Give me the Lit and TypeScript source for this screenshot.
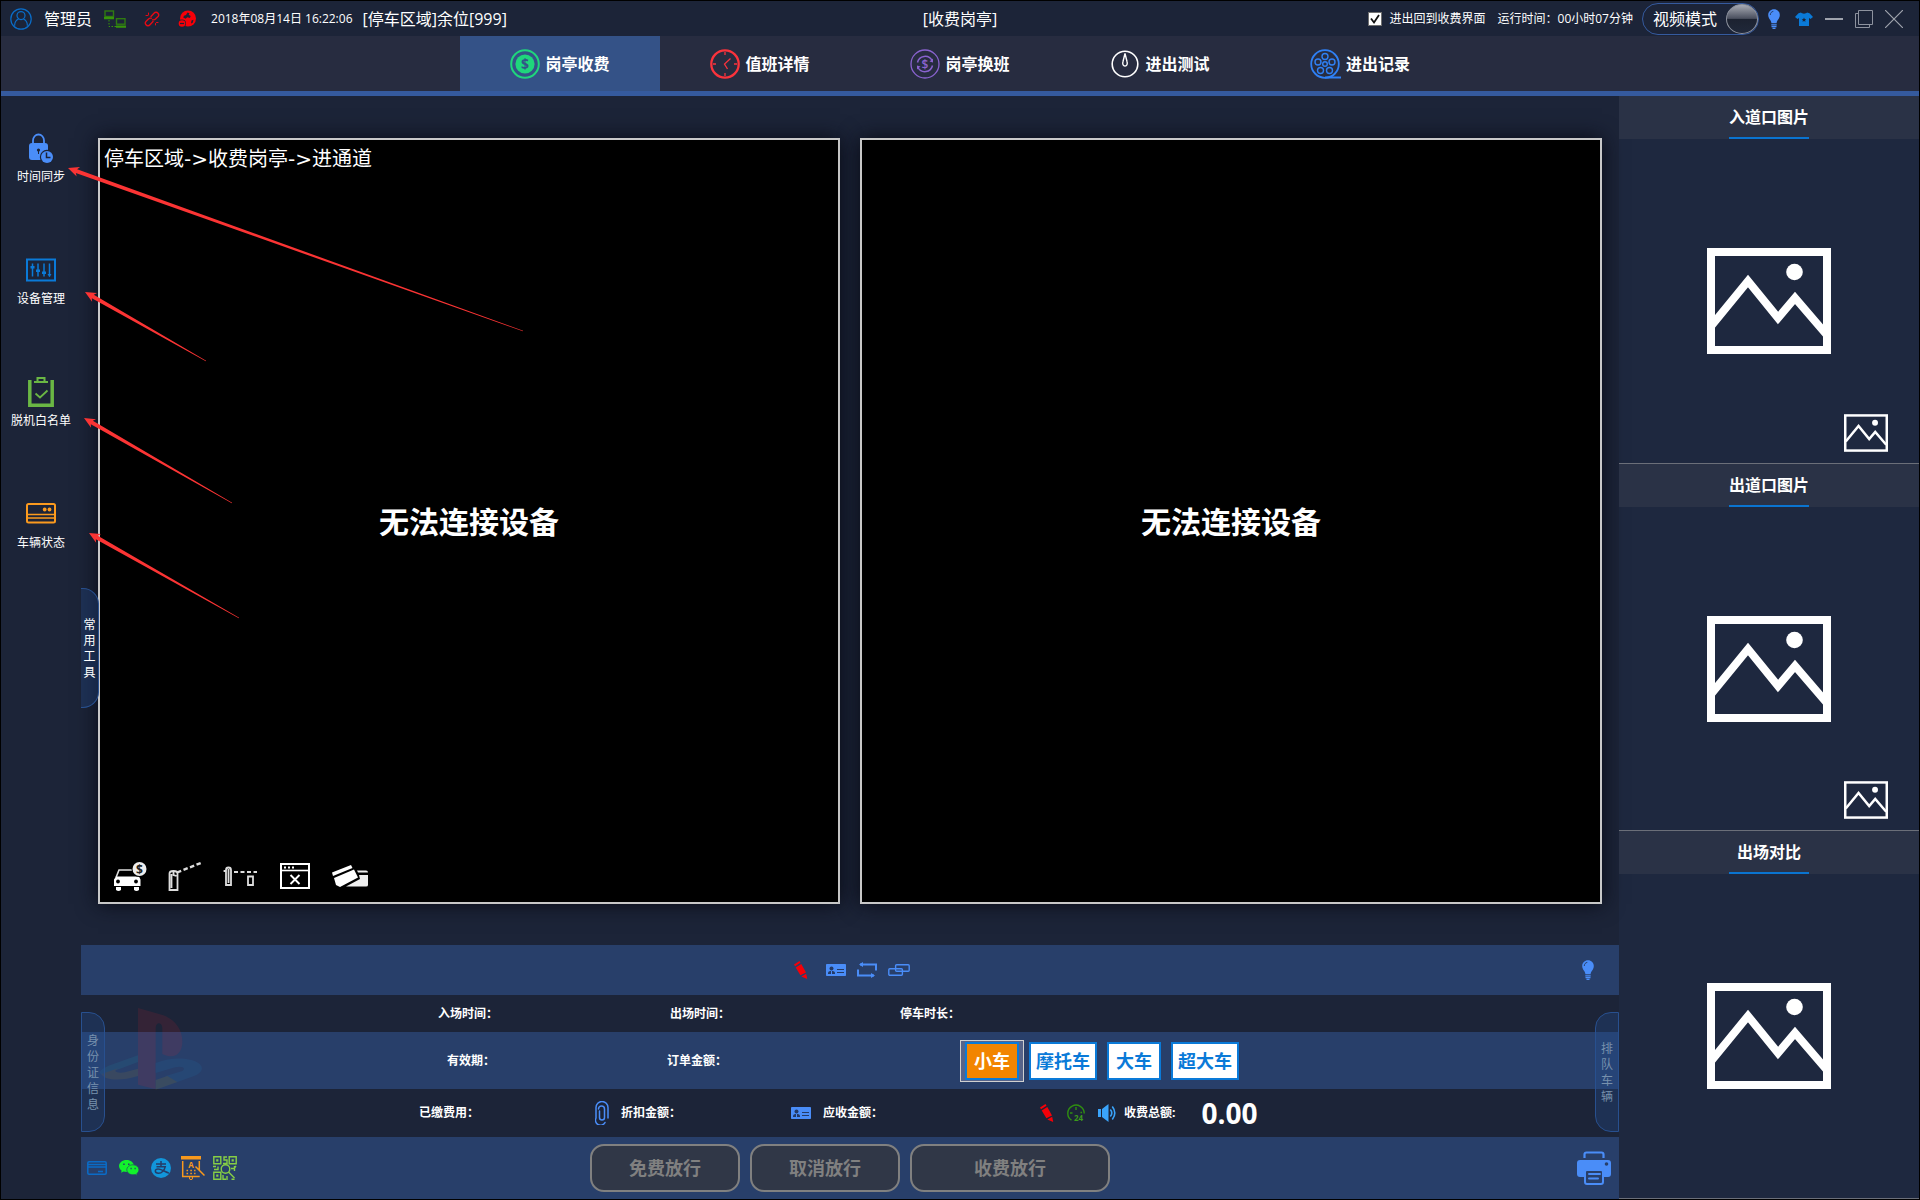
import { LitElement, html, css, svg, type TemplateResult } from "lit";
import { customElement, property, state } from "lit/decorators.js";
import { classMap } from "lit/directives/class-map.js";

const icon = (w: number, h: number, box: string, body: TemplateResult) =>
  html`<svg width=${w} height=${h} viewBox=${box} fill="none" aria-hidden="true">${body}</svg>`;

const userIcon = icon(22, 22, "0 0 22 22", svg`
  <g stroke="#0a6dc9" stroke-width="1.2"><circle cx="11" cy="11" r="10.2"/><circle cx="11" cy="7.6" r="4"/>
  <path d="M8.6 11C6 12 4.6 14.4 4.6 17.8M13.4 11c2.6 1 4 3.400 4 6.800"/></g>`);

const networkIcon = icon(22, 18, "0 0 22 18", svg`
  <g stroke="#2f7a12" stroke-width="1.400"><rect x="1" y="1" width="8.500" height="5.500"/><rect x="12.500" y="8.700" width="8.500" height="5.500"/></g>
  <path fill="#36940b" d="M0 7h10v2.200H0zM12 15.500h10v2.300H12z"/>
  <path stroke="#36940b" stroke-dasharray="1.500 1.500" d="M5 10v6.500h7"/>`);

const brokenLinkIcon = icon(16, 16, "0 0 16 16", svg`
  <g stroke="#e80a14" stroke-width="1.400" stroke-linecap="round">
  <path d="M7 5.500l3-3.300c1.200-1.300 3-1.200 4 0s.9 2.500-.2 3.600L11.500 8c-.8.8-1.700 1-2.700.8"/>
  <path d="M9 10.500l-3 3.300c-1.200 1.300-3 1.200-4 0s-.9-2.500.2-3.600L4.500 8c.8-.8 1.700-1 2.700-.8"/>
  <path stroke-width="1" d="M4.500 2v1.500M2 4.500h1.500M4 4.600l-.2-.3M11.500 14v-1.500M14 11.500h-1.500"/></g>`);

const globeIcon = icon(18, 18, "0 0 18 18", svg`
  <circle cx="10" cy="8.500" r="8" fill="#f80008"/>
  <path fill="#1c2438" d="M9.500 2.500l2 .8-.8 1.500 2 1.200-.8 2-2.600-.8-1.700 1.600-2.400-1.200L6 5.800l2-.8zM13.500 10.500l2-.8-.8 3-1.700.8z"/>
  <circle cx="4" cy="13.500" r="4" fill="#1c2438"/><circle cx="4" cy="13.500" r="3.300" fill="#f80008"/>
  <path stroke="#1c2438" stroke-width="1.200" d="M2 13.500h4"/>`);

const bulbIcon = (w: number, h: number) => icon(w, h, "0 0 12 20", svg`
  <path fill="#4a8df8" d="M6 .3C2.700.3.200 2.800.200 6c0 2.200 1 3.500 2 5 .7 1.100 1 1.900 1.200 3.200h5.200c.2-1.300.5-2.100 1.200-3.200 1-1.500 2-2.800 2-5C11.800 2.800 9.300.300 6 .300z"/>
  <path stroke="#283f6a" d="M2.300 6c0-2 1.200-3.400 3-3.600"/>
  <path stroke="#4a8df8" stroke-width="1.200" d="M3.300 15.800h5.400M3.500 17.600h5M4.500 19.300h3"/>`);

const shirtIcon = icon(18, 14, "0 0 18 14", svg`
  <path fill="#0a7ad8" d="M6 .5c.8 1.500 5.200 1.500 6 0l2.500.8L18 5l-2.500 2-1.500-1v8H4V6L2.500 7 0 5l3.500-3.700z"/>
  <path fill="#1c2438" d="M9 5.500l.7 1.500 1.600.1-1.200 1 .4 1.600L9 8.900l-1.500.8.4-1.600-1.200-1 1.600-.1z"/>`);

const minimizeIcon = icon(18, 18, "0 0 18 18", svg`<path stroke="#9fa3ad" stroke-width="2" d="M0 9h18"/>`);
const restoreIcon = icon(18, 18, "0 0 18 18", svg`<path stroke="#8e939f" d="M3.500.5h14v14h-14zM3.500 3.500h-3v14h14v-3"/>`);
const closeIcon = icon(18, 18, "0 0 18 18", svg`<path stroke="#9fa3ad" stroke-width="1.200" d="M0 0l18 18M18 0L0 18"/>`);

const coinIcon = icon(30, 30, "0 0 30 30", svg`
  <circle cx="15" cy="15" r="13.800" stroke="#1fd67c" stroke-width="2"/><circle cx="15" cy="15" r="9.600" fill="#1fd67c"/>
  <text x="15" y="20" text-anchor="middle" font-family="Open Sans" font-size="14" fill="#345287">$</text>`);
const clockIcon = icon(30, 30, "0 0 30 30", svg`
  <circle cx="15" cy="15" r="13.700" stroke="#fb333c" stroke-width="2.300"/>
  <path stroke="#fb333c" stroke-width="1.300" d="M15 3v3M15 24v3M3 15h3M24 15h3M20.500 9.500L14.500 15l3 5"/>`);
const shiftIcon = icon(30, 30, "0 0 30 30", svg`
  <circle cx="15" cy="15" r="14" stroke="#8a63cf" stroke-width="1.300"/>
  <path stroke="#8a63cf" stroke-width="1.500" d="M7.500 13.500a7.800 7.800 0 0 1 14.500-2M22.500 16.500a7.800 7.800 0 0 1-14.500 2"/>
  <path fill="#8a63cf" d="M23 9.500v4l-3.500-1zM7 20.500v-4l3.500 1z"/>
  <text x="15" y="19.500" text-anchor="middle" font-family="Open Sans" font-weight="600" font-size="12" fill="#8a63cf">$</text>`);
const gaugeIcon = icon(30, 30, "0 0 30 30", svg`
  <circle cx="15" cy="15" r="12.800" stroke="#fff" stroke-width="1.600"/>
  <path stroke="#fff" stroke-width="1.400" d="M15 4.500l-2 8c-.8 2.500.200 4.500 2 4.500s2.800-2 2-4.500z"/>`);
const reelIcon = icon(31, 30, "0 0 31 30", svg`
  <g stroke="#2f80f5" stroke-width="1.400"><circle cx="15" cy="15" r="13.800" stroke-width="1.800"/><circle cx="15" cy="15" r="2.300"/>
  <circle cx="15" cy="7.500" r="3"/><circle cx="8" cy="13" r="3"/><circle cx="22" cy="13" r="3"/><circle cx="10.500" cy="21.500" r="3"/><circle cx="19.500" cy="21.500" r="3"/>
  <path stroke-width="2" d="M15 28.500h16"/></g>`);

const lockIcon = icon(30, 30, "0 0 30 30", svg`
  <path stroke="#4a8df8" stroke-width="1.800" d="M7 12V7.500a5.500 6 0 0 1 11 0V12"/>
  <rect x="3" y="10" width="19" height="17" rx="3" fill="#4a8df8"/>
  <circle cx="21" cy="24" r="7.200" fill="#1c2438"/><circle cx="21" cy="24" r="6" fill="#4a8df8"/>
  <path stroke="#1c2438" stroke-width="1.500" d="M20.500 19.500V24.500h4"/>
  <circle cx="12.500" cy="17" r="1.600" fill="#1c2438"/><path stroke="#1c2438" d="M12.500 17v4"/>`);
const slidersIcon = icon(30, 30, "0 0 30 30", svg`
  <rect x="1" y="4.500" width="28" height="21" stroke="#0a7ad8" stroke-width="2"/>
  <path stroke="#0a7ad8" stroke-width="1.500" d="M6.500 8.500v13M12 8.500v13M18 8.500v13M23.500 8.500v13"/>
  <path fill="#0a7ad8" d="M4.500 11h4v2.500h-4zM10 14.500h4V17h-4zM16 16.500h4V19h-4zM21.500 19h4l-2 3z"/>`);
const clipboardIcon = icon(30, 30, "0 0 30 30", svg`
  <path stroke="#6ab744" stroke-width="3.500" d="M3.800 3v25.200h22.400V3"/>
  <path stroke="#6ab744" stroke-width="2" d="M8 5h14M11.500 4V1h7v3"/>
  <path stroke="#6ab744" stroke-width="1.800" d="M9.500 16.500l4.500 4 7.500-7"/>`);
const cardReaderIcon = icon(30, 30, "0 0 30 30", svg`
  <rect x="1" y="5" width="28" height="18.500" rx="1.500" stroke="#fb9a1e" stroke-width="2"/>
  <path stroke="#fb9a1e" stroke-width="1.600" d="M1 15.500h28M1 19h28"/>
  <circle cx="18.700" cy="10.500" r="1.900" fill="#fb9a1e"/><circle cx="23.500" cy="10.500" r="1.900" fill="#fb9a1e"/>`);

const carFeeIcon = icon(36, 36, "0 0 36 36", svg`
  <path stroke="#ddd" stroke-width="1.600" d="M4 19.500l3-7.500h13"/>
  <path fill="#fff" d="M4 18.500h23l1.500 3V28H2v-6.500zM4 29h5v3q-2.500 2-5 0zM22 29h5v3q-2.500 2-5 0z"/>
  <circle cx="6" cy="23.500" r="1.900" fill="#000"/><circle cx="24" cy="23.500" r="1.900" fill="#000"/>
  <circle cx="27.500" cy="11" r="8" fill="#000"/><circle cx="27.500" cy="11" r="7" fill="#eee"/>
  <text x="27.500" y="15.500" text-anchor="middle" font-family="Open Sans" font-weight="700" font-size="12" fill="#222">$</text>`);
const gateOpenIcon = icon(36, 36, "0 0 36 36", svg`
  <path stroke="#ddd" stroke-width="1.800" d="M2.500 32V15.500q0-2.500 4-2.500t4 2.500V32zM4.500 16v14M6.500 13v4l3 1"/>
  <path stroke="#ddd" stroke-width="2.400" stroke-dasharray="4.500 2.500" d="M10 14.500L35 4.500"/>`);
const gateClosedIcon = icon(36, 36, "0 0 36 36", svg`
  <path stroke="#ddd" stroke-width="1.800" d="M4 27V12q0-2.500 2.500-2.500T9 12v15zM6.500 11v14M2.500 14v-2M26 18.500h5v8.500h-5z"/>
  <path stroke="#ddd" stroke-width="2" stroke-dasharray="4 2.500" d="M12 14h23"/>`);
const windowCloseIcon = icon(36, 36, "0 0 36 36", svg`
  <rect x="4" y="6" width="28" height="24" stroke="#fff" stroke-width="2"/>
  <path stroke="#fff" stroke-width="1.600" d="M4 12.500h28"/>
  <path stroke="#fff" stroke-width="2" stroke-dasharray="2 2" d="M7 9.500h10"/>
  <path stroke="#fff" stroke-width="1.900" d="M13.500 17l9 9M22.500 17l-9 9"/>`);
const cardsIcon = icon(36, 36, "1 0 36 36", svg`
  <path fill="#fff" d="M1 14.500L20 7l1.500 3L2 18zM3 20l20-8.500 4 8L9 29l-4-2z"/>
  <path fill="#eee" d="M26 12.500h9q2 0 2 2h-10zM28 17h9v10q0 1.500-2 1.500H15L29 21z"/>`);

const pencilIcon = icon(14, 18, "0 0 14 18", svg`
  <path fill="#f50008" d="M0 3.500L5.500 0l1 1.800L1 5.300zM1.700 6.500L7.300 3l4.700 8.500-5.600 2.800zM7.300 15.500l4.900-2.700 1 5.200z"/>`);
const idCardIcon = icon(20, 12, "0 0 20 12", svg`
  <rect width="20" height="12" rx=".8" fill="#4a8df8"/>
  <path fill="#243a66" d="M2 10V9q0-1.500 2-2h3q2 .5 2 2v1z"/><circle cx="5.500" cy="4.600" r="2" fill="#243a66"/>
  <path stroke="#243a66" stroke-width="1.200" d="M11 5.500h7M11 8.500h7"/><path stroke="#4a8df8" d="M5.500 7v3"/>`);
const loopIcon = icon(20, 16, "0 0 20 16", svg`
  <path stroke="#4a8df8" stroke-width="2" d="M3 2.500h16v6M17 13.500H1v-6"/>
  <path fill="#4a8df8" d="M2 2.500L6 0v5zM18 13.500L14 11v5z"/>`);
const chainIcon = icon(22, 12, "0 0 22 12", svg`
  <g stroke="#4a8df8" stroke-width="1.400"><rect x="7.600" y=".8" width="13.600" height="6.400" rx="1"/>
  <rect x=".8" y="4.800" width="13.600" height="6.400" rx="1"/></g>`);
const paperclipIcon = icon(14, 24, "0 0 14 24", svg`
  <path stroke="#4a8df8" stroke-width="1.500" stroke-linecap="round" d="M4.500 10v6.500a2.500 2.500 0 0 0 5 0V8a3 3 0 0 0-6 0M13 17V6.500A5.800 5.800 0 0 0 1 6.500V17a5 5 0 0 0 9 4.500"/>`);
const clock24Icon = icon(18, 18, "0 0 18 18", svg`
  <path stroke="#2f8f10" stroke-width="1.400" d="M4.500 16.200A8.200 8.200 0 1 1 17.200 9.500M9 3v3M3 9h2.500M13.500 8.500h1.500"/>
  <text x="7" y="17" font-family="Open Sans" font-weight="700" font-size="8" fill="#3c9a1c">24</text>`);
const speakerIcon = icon(18, 18, "0 0 18 18", svg`
  <path fill="#3aa4fb" d="M0 5h3v8H0zM4 5l6.500-5v18L4 13z"/>
  <path stroke="#3aa4fb" stroke-width="1.600" d="M12.300 5.500q3 3.500 0 7M14.300 2.500q5 6.500 0 13"/>`);
const printerIcon = icon(34, 34, "0 0 34 34", svg`
  <path stroke="#4a8df8" stroke-width="2.200" d="M7.500 7V3.500q0-2 2-2h15q2 0 2 2V7"/>
  <path fill="#4a8df8" d="M3 9h28q3 0 3 3v11q0 3-3 3H3q-3 0-3-3V12q0-3 3-3z"/>
  <rect x="8" y="19" width="18" height="14" rx="2" fill="#283f6a" stroke="#4a8df8" stroke-width="2"/>
  <path stroke="#4a8df8" stroke-width="2" stroke-linecap="round" d="M12 23h11M12 27.500h9"/>
  <circle cx="29.500" cy="13" r="1.800" fill="#283f6a"/>`);

const bankCardIcon = icon(20, 14, "0 0 20 14", svg`
  <rect x=".8" y=".8" width="18.400" height="12.400" rx="1.200" stroke="#0a6cc8" stroke-width="1.500"/>
  <path stroke="#0a6cc8" stroke-width="1.500" d="M1 3.500h18M1 6h18M11 10.500h5"/>`);
const wechatIcon = icon(20, 16, "0 0 20 16", svg`
  <path fill="#12f22c" d="M7.500 0C3.300 0 0 2.700 0 6c0 1.900 1 3.500 2.700 4.700L2 12.800l2.600-1.300c1 .3 1.900.4 2.900.4C11.700 11.900 15 9.300 15 6S11.700 0 7.500 0z"/>
  <path fill="#12f22c" stroke="#283f6a" stroke-width=".7" d="M14 4.800c-3.400 0-6.200 2.200-6.200 5s2.800 5 6.200 5c.7 0 1.500-.1 2.200-.4l2 1.200-.5-1.900c1.400-.9 2.200-2.300 2.200-3.900 0-2.800-2.500-5-5.900-5z"/>
  <path stroke="#283f6a" stroke-width="1.500" d="M4.200 4.200h1.500M9 4.200h1.500M11.500 8.500h1.200M15.500 8.500h1.200"/>`);
const alipayIcon = icon(20, 20, "0 0 20 20", svg`
  <circle cx="10" cy="10" r="10" fill="#1296db"/>
  <path stroke="#253d69" stroke-width="1.500" d="M5 6h10M10 3v5.500M5.500 8.800h8.700c-.7 3-3.200 6.500-6.700 6.500-2 0-3.200-.9-3.200-2.200 0-1.500 1.600-2.200 3.200-2 3 .3 6.500 2.600 10.500 4"/>`);
const boardIcon = icon(24, 24, "0 0 24 24", svg`
  <path fill="#f8991d" d="M0 0h20v3.500H0z"/><path stroke="#f8991d" stroke-width="1.500" d="M1.700 5v15.500h17M18.300 5v9M14.500 10.500L23.500 19.500"/>
  <circle cx="10" cy="22" r="1.600" stroke="#f8991d"/>
  <path stroke="#f8991d" stroke-width="1.400" stroke-dasharray="1.600 2.200" d="M5.500 14.500h9M5.500 17.500h9"/>
  <text x="10" y="11.500" text-anchor="middle" font-family="Open Sans" font-weight="700" font-size="8" fill="#f8991d">A</text>`);
const qrIcon = icon(24, 24, "0 0 24 24", svg`
  <g stroke="#86cf45" stroke-width="1.400"><path d="M.8.8h7v7h-7zM16.200.8h7v7h-7zM.8 16.200h7v7h-7z"/>
  <path d="M14 1h-3v3h3v3.500h-4M0 10.500h3M1 13.500h4v-3M18 12.500h3l2-2.500M21.500 10v5M10 19v4.300h3M14 20v4M18.500 23.300h3"/>
  <circle cx="12.500" cy="13" r="4.300"/><path d="M15.500 16l6 6"/></g>
  <path fill="#86cf45" d="M3.200 3.200h2.200v2.200H3.200zM18.600 3.200h2.200v2.200h-2.200zM3.200 18.600h2.200v2.200H3.200z"/>`);

const pictureIcon = (w: number, h: number, line: number) => icon(w, h, "0 0 124 106", svg`
  <rect x=${line / 2} y=${line / 2} width=${124 - line} height=${106 - line} stroke="#fff" stroke-width=${line}/>
  <path stroke="#fff" stroke-width=${line} d="M5 77L41 33l30 37 17-20 31 36"/>
  <circle cx="87.500" cy="24" r="8.300" fill="#fff"/>`);

const consoleWatermark = icon(103, 82, "0 0 309 246", svg`
  <path fill="#e0202a" d="M114 0l76 22c35 12 57 43 57 78 0 40-25 55-60 38V60c0-18-20-20-20 0v184l-53-14z"/>
  <path fill="#1a9bb0" d="M114 142L30 172C2 184-6 192 4 200l56-18 54-20z"/>
  <path fill="#b08a20" d="M4 198c10 20 60 22 110 6v-22l-39 11c-26 4-40-4-18-13z"/>
  <path fill="#1a7fc0" d="M167 165c53-20 103-15 128 0 20 15 10 30-15 40l-50 18-35-18 50-15c17-10 0-18-20-12l-58 17z"/>
  <path fill="#b0a020" d="M167 216l35-12 30 18-65 23z"/>`);

/** Tapered pointer: a solid head at the tip, thinning to a point at the tail. */
function pointer(tx: number, ty: number, ex: number, ey: number) {
  const len = Math.hypot(ex - tx, ey - ty);
  const ux = (ex - tx) / len;
  const uy = (ey - ty) / len;
  const at = (along: number, side: number) => `${tx + ux * along - uy * side},${ty + uy * along + ux * side}`;
  const points = [at(0, 0), at(11, 5), at(9, 2), at(len, 0.3), at(len, -0.3), at(9, -2), at(11, -5)].join(" ");
  return svg`<polygon points=${points} fill="#fb3434"/>`;
}

@customElement("picture-panel")
export class PicturePanel extends LitElement {
  @property() heading = "";
  @property({ type: Boolean }) thumbnail = false;

  static styles = css`
    :host { display: flex; flex-direction: column; flex: 1; position: relative; border-bottom: 1px solid #6b6f79; }
    .heading { margin: 0; display: flex; justify-content: center; background: #2a3246; font-size: 16px; line-height: 39px; font-weight: 700; }
    .title { min-width: 80px; padding-top: 2px; text-align: center; border-bottom: 2px solid #0a74d0; }
    .picture { flex: 1; display: flex; align-items: center; justify-content: center; }
    .thumb { position: absolute; right: 31px; bottom: 11px; }
    svg { display: block; }
  `;

  render() {
    return html`
      <h2 class="heading"><span class="title">${this.heading}</span></h2>
      <div class="picture">${pictureIcon(124, 106, 8)}</div>
      ${this.thumbnail ? html`<div class="thumb">${pictureIcon(44, 38, 7)}</div>` : ""}
    `;
  }
}

@customElement("app-root")
export class AppRoot extends LitElement {
  @state() private tab = 0;
  @state() private vehicle = 0;

  private tabs = [
    { label: "岗亭收费", icon: coinIcon },
    { label: "值班详情", icon: clockIcon },
    { label: "岗亭换班", icon: shiftIcon },
    { label: "进出测试", icon: gaugeIcon },
    { label: "进出记录", icon: reelIcon },
  ];

  private tools = [
    { label: "时间同步", icon: lockIcon },
    { label: "设备管理", icon: slidersIcon },
    { label: "脱机白名单", icon: clipboardIcon },
    { label: "车辆状态", icon: cardReaderIcon },
  ];

  private vehicles = ["小车", "摩托车", "大车", "超大车"];

  static styles = css`
    :host {
      display: block;
      color: #fff;
      font-family: "Open Sans", "Noto Sans CJK SC", sans-serif;
      font-size: 12px;
      line-height: 16px;
    }
    * { box-sizing: border-box; }
    svg { display: block; flex: none; }
    button { font: inherit; color: inherit; background: none; border: 0; padding: 0; margin: 0; cursor: pointer; }
    .window { display: flex; flex-direction: column; min-height: 100vh; border: 1px solid #000; background: #1c2438; position: relative; }

    .titlebar { display: grid; grid-template-columns: 1fr auto 1fr; align-items: center; min-height: 35px; white-space: nowrap; }
    .status, .controls { display: flex; align-items: center; }
    .controls { justify-content: flex-end; gap: 12px; padding-right: 16px; }
    .status { gap: 12px; padding-left: 9px; }
    .status .signals { display: flex; align-items: center; gap: 18px; }
    .status .clock { display: flex; align-items: center; gap: 10px; padding-left: 3px; }
    .large { font-size: 16px; line-height: 24px; }
    .check { display: flex; align-items: center; gap: 8px; }
    .tick { display: grid; }
    .tick > * { grid-area: 1 / 1; }
    .tick input { appearance: none; margin: 0; width: 14px; height: 14px; background: #fff; border: 1px solid #707070; }
    .tick svg { visibility: hidden; pointer-events: none; }
    .tick input:checked + svg { visibility: visible; }
    .mode { display: flex; align-items: center; gap: 9px; height: 32px; padding: 0 0 0 10px; border: 1px solid #355a9e; border-radius: 16px; font-size: 16px; }
    .knob { width: 32px; height: 30px; border-radius: 50%; border: 1px solid #8e939f; background: linear-gradient(#a8abb4, #4a4f5e 48%, #1c2230 50%, #20283a); }
    .run, .skin { display: flex; align-items: center; gap: 9px; }
    .skin { gap: 15px; }

    .tabs { display: flex; justify-content: center; background: #272c40; border-bottom: 5px solid #355a9e; }
    .tab { display: flex; align-items: center; justify-content: center; gap: 5px; width: 200px; min-height: 55px; font-size: 16px; font-weight: 700; }
    .tab.active { background: #345287; }

    .body { flex: 1; display: flex; }
    .tools { width: 80px; padding-top: 37px; display: flex; flex-direction: column; gap: 70px; }
    .tool { display: flex; flex-direction: column; align-items: center; gap: 6px; }
    .center { flex: 1; min-width: 0; display: flex; flex-direction: column; }
    .stage { flex: 1; display: flex; gap: 20px; padding: 42px 17px 41px; position: relative; }
    .video { flex: 1; display: flex; flex-direction: column; justify-content: space-between; background: #000; border: 2px solid #c8c8c8; box-shadow: 0 0 20px #080a14; position: relative; }
    .path { padding: 4px; font-family: "DejaVu Sans", "Noto Sans CJK SC", sans-serif; font-size: 20px; line-height: 30px; }
    .offline { position: absolute; inset: 0; display: grid; place-items: center; padding-top: 2px; font-size: 30px; line-height: 40px; font-weight: 700; }
    .lane { display: flex; gap: 19px; padding: 8px 12px; position: relative; }

    .side-tab { position: absolute; z-index: 1; top: 17px; width: 24px; height: 120px; display: grid; place-items: center; padding-top: 2px; border: 1px solid #28508f; background: rgba(36, 78, 150, 0.3); color: #7891ad; font-weight: 400; }
    .side-tab span { width: 12px; word-break: break-all; }
    .side-tab.left { left: 0; border-radius: 0 16px 16px 0; }
    .side-tab.right { right: 0; border-radius: 16px 0 0 16px; }
    .side-tab.common { top: 58%; left: 0; width: 18px; border-left: 0; border-radius: 0 16px 16px 0; color: #fff; }

    .band { background: #283f6a; }
    .toolbar { display: grid; grid-template-columns: 1fr auto 1fr; align-items: center; min-height: 50px; padding: 0 25px 0 29px; }
    .toolbar .quick { display: flex; align-items: center; gap: 11px; grid-column: 2; }
    .toolbar .quick button:first-child { margin-right: 7px; }
    .toolbar .hint { display: flex; justify-self: end; }
    .details { position: relative; font-weight: 700; }
    .watermark { position: absolute; left: 19px; top: 13px; opacity: 0.12; }
    .row { display: grid; grid-template-columns: 417fr 232fr 230fr 659fr; align-items: center; min-height: 37px; }
    .row.type { min-height: 57px; }
    .row.fees { grid-template-columns: 398fr 202fr 202fr 736fr; min-height: 48px; }
    .label { display: flex; align-items: center; justify-content: flex-end; gap: 12px; }
    .row.type .label { padding-right: 3px; }
    .vehicles { display: flex; align-items: center; gap: 10px; padding-left: 5px; }
    .vehicle { min-width: 54px; padding: 5px; border: 2px solid #0a7ad8; background: #fff; color: #0a7ad8; font-size: 18px; line-height: 24px; font-weight: 700; }
    .vehicle.active { background: #f28500; color: #fff; }
    .chosen { display: flex; margin: -2px -5px; padding: 1px 4px; border: 1px solid #d0d0d0; background: #56648a; }
    .total { display: flex; align-items: center; gap: 13px; padding-left: 157px; white-space: nowrap; }
    .total .sound { display: flex; align-items: center; gap: 8px; }
    .amount { padding-left: 13px; font-size: 28px; line-height: 36px; }

    .footer { display: grid; grid-template-columns: 1fr auto 1fr; align-items: center; min-height: 62px; padding: 0 8px 0 6px; }
    .pay, .release { display: flex; align-items: center; gap: 10px; }
    .release { padding-left: 2px; }
    .pay { gap: 12px; }
    .pay button { display: flex; justify-content: center; width: 20px; }
    .release button { min-width: 150px; padding: 10px 0; border: 2px solid #808080; border-radius: 14px; background: #303747; color: #808080; font-size: 18px; line-height: 24px; font-weight: 700; }
    .release button.wide { min-width: 200px; }
    .print { display: flex; justify-self: end; }

    .pictures { width: 300px; display: flex; flex-direction: column; background: #1e283f; }
    .pointers { position: absolute; left: 0; top: 0; z-index: 2; pointer-events: none; }
  `;

  private iconButton(name: string, picture: TemplateResult) {
    return html`<button type="button" aria-label=${name}>${picture}</button>`;
  }

  private renderTitlebar() {
    return html`
      <header class="titlebar">
        <div class="status">
          ${userIcon}<span class="large">管理员</span>
          <span class="signals">${networkIcon}${brokenLinkIcon}${globeIcon}</span>
          <span class="clock"><time>2018年08月14日 16:22:06</time><span class="large">[停车区域]余位[999]</span></span>
        </div>
        <div class="large">[收费岗亭]</div>
        <div class="controls">
          <label class="check">
            <span class="tick">
              <input type="checkbox" checked />
              ${icon(14, 14, "0 0 14 14", svg`<path stroke="#111" stroke-width="1.800" d="M3 6.500l3 4L11 3"/>`)}
            </span>
            进出回到收费界面
          </label>
          <div class="run">
            <span>运行时间：00小时07分钟</span>
            <button type="button" class="mode">视频模式<span class="knob"></span></button>
            <div class="skin">
              ${this.iconButton("提示", bulbIcon(12, 20))}
              ${this.iconButton("换肤", shirtIcon)}
            </div>
          </div>
          ${this.iconButton("最小化", minimizeIcon)}
          ${this.iconButton("还原", restoreIcon)}
          ${this.iconButton("关闭", closeIcon)}
        </div>
      </header>
    `;
  }

  private renderStage() {
    return html`
      <section class="stage">
        <div class="video">
          <div class="offline">无法连接设备</div>
          <div class="path">停车区域-&gt;收费岗亭-&gt;进通道</div>
          <div class="lane">
            ${this.iconButton("收费", carFeeIcon)}
            ${this.iconButton("开闸", gateOpenIcon)}
            ${this.iconButton("关闸", gateClosedIcon)}
            ${this.iconButton("关闭画面", windowCloseIcon)}
            ${this.iconButton("刷卡", cardsIcon)}
          </div>
        </div>
        <div class="video"><div class="offline">无法连接设备</div></div>
        <button type="button" class="side-tab common"><span>常用工具</span></button>
      </section>
    `;
  }

  private renderVehicle(name: string, index: number) {
    const active = index === this.vehicle;
    const button = html`<button type="button" class=${classMap({ vehicle: true, active })}
      aria-pressed=${active} @click=${() => (this.vehicle = index)}>${name}</button>`;
    return active ? html`<span class="chosen">${button}</span>` : button;
  }

  private renderConsole() {
    return html`
      <section>
        <div class="toolbar band">
          <div class="quick">
            ${this.iconButton("编辑", pencilIcon)}
            ${this.iconButton("证件", idCardIcon)}
            ${this.iconButton("切换", loopIcon)}
            ${this.iconButton("关联", chainIcon)}
          </div>
          <div class="hint">${this.iconButton("提示", bulbIcon(12, 20))}</div>
        </div>
        <div class="details">
          <div class="row">
            <span class="label">入场时间：</span><span class="label">出场时间：</span><span class="label">停车时长：</span>
          </div>
          <div class="row type band">
            <span class="label">有效期：</span><span class="label">订单金额：</span><span></span>
            <div class="vehicles">${this.vehicles.map((name, i) => this.renderVehicle(name, i))}</div>
          </div>
          <div class="row fees">
            <span class="label">已缴费用：</span>
            <span class="label">${paperclipIcon}折扣金额：</span>
            <span class="label">${idCardIcon}应收金额：</span>
            <div class="total">
              ${this.iconButton("编辑", pencilIcon)}
              ${clock24Icon}
              <span class="sound">${this.iconButton("播报", speakerIcon)}<span>收费总额:</span></span>
              <output class="amount">0.00</output>
            </div>
          </div>
          <div class="watermark">${consoleWatermark}</div>
          <button type="button" class="side-tab left"><span>身份证信息</span></button>
          <button type="button" class="side-tab right"><span>排队车辆</span></button>
        </div>
        <footer class="footer band">
          <div class="pay">
            ${this.iconButton("银行卡", bankCardIcon)}
            ${this.iconButton("微信", wechatIcon)}
            ${this.iconButton("支付宝", alipayIcon)}
            ${this.iconButton("公告", boardIcon)}
            ${this.iconButton("二维码", qrIcon)}
          </div>
          <div class="release">
            <button type="button">免费放行</button>
            <button type="button">取消放行</button>
            <button type="button" class="wide">收费放行</button>
          </div>
          <div class="print">${this.iconButton("打印", printerIcon)}</div>
        </footer>
      </section>
    `;
  }

  render() {
    return html`
      <div class="window">
        ${this.renderTitlebar()}
        <nav class="tabs">
          ${this.tabs.map((t, i) => html`
            <button type="button" class=${classMap({ tab: true, active: i === this.tab })} @click=${() => (this.tab = i)}>
              ${t.icon}<span>${t.label}</span>
            </button>`)}
        </nav>
        <main class="body">
          <aside class="tools">
            ${this.tools.map((t) => html`<button type="button" class="tool">${t.icon}<span>${t.label}</span></button>`)}
          </aside>
          <div class="center">${this.renderStage()}${this.renderConsole()}</div>
          <aside class="pictures">
            <picture-panel heading="入道口图片" thumbnail></picture-panel>
            <picture-panel heading="出道口图片" thumbnail></picture-panel>
            <picture-panel heading="出场对比"></picture-panel>
          </aside>
        </main>
        <svg class="pointers" width="540" height="640" viewBox="1 1 540 640" aria-hidden="true">
          ${pointer(68, 168, 523, 331)}
          ${pointer(85, 292, 206, 361)}
          ${pointer(84, 418, 232, 503)}
          ${pointer(89, 533, 239, 618)}
        </svg>
      </div>
    `;
  }
}
